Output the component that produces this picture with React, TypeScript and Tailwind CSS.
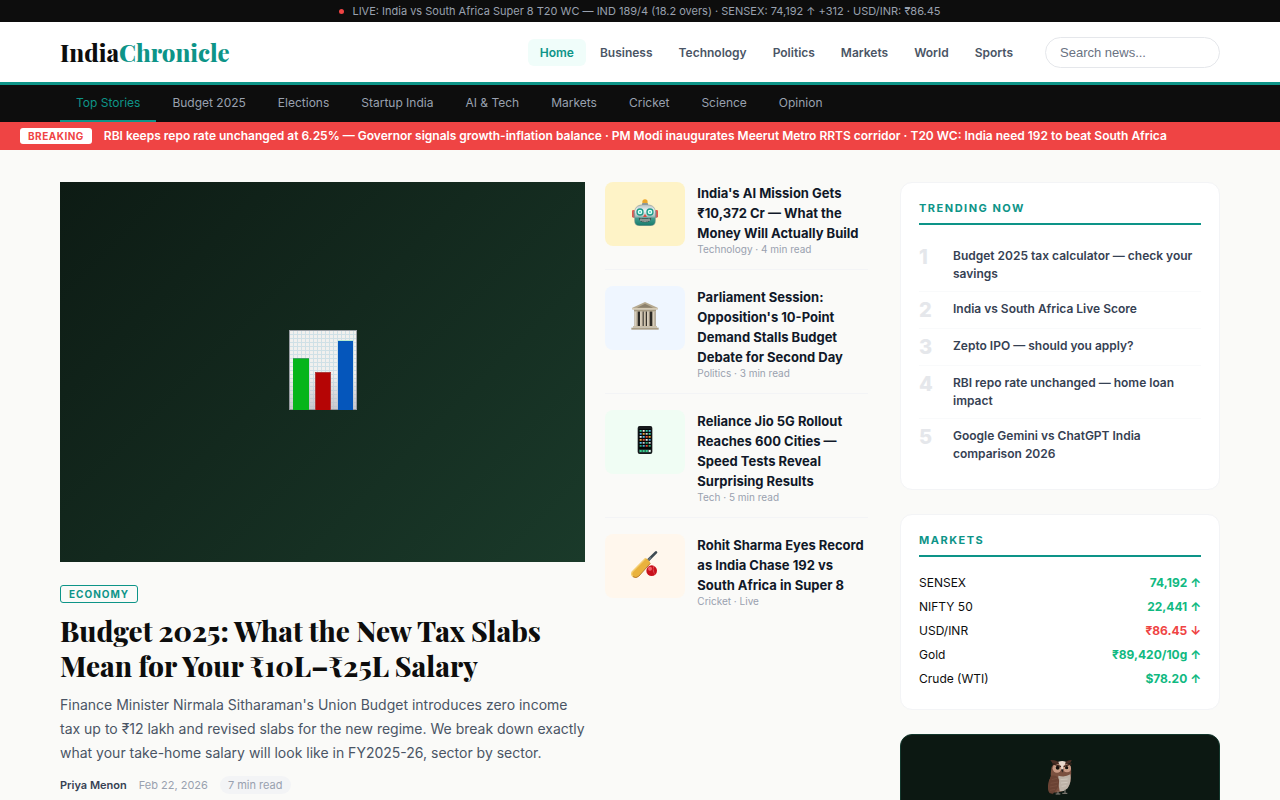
// src/App.tsx

import type { ReactNode } from 'react';
import clsx from 'clsx';

const navLinks = ['Home', 'Business', 'Technology', 'Politics', 'Markets', 'World', 'Sports'];

const topics = [
  'Top Stories',
  'Budget 2025',
  'Elections',
  'Startup India',
  'AI & Tech',
  'Markets',
  'Cricket',
  'Science',
  'Opinion'
];

const trending = [
  'Budget 2025 tax calculator — check your savings',
  'India vs South Africa Live Score',
  'Zepto IPO — should you apply?',
  'RBI repo rate unchanged — home loan impact',
  'Google Gemini vs ChatGPT India comparison 2026'
];

const markets = [
  { name: 'SENSEX', value: '74,192', up: true },
  { name: 'NIFTY 50', value: '22,441', up: true },
  { name: 'USD/INR', value: '₹86.45', up: false },
  { name: 'Gold', value: '₹89,420/10g', up: true },
  { name: 'Crude (WTI)', value: '$78.20', up: true }
];

const ChartIcon = () => (
  <svg width="68" height="80" viewBox="0 0 68 80" aria-hidden="true">
    <defs>
      <pattern id="chart-grid" width="4" height="4" patternUnits="userSpaceOnUse">
        <rect width="4" height="4" fill="#f1f0ee" />
        <path d="M0 0.5H4M0.5 0V4" stroke="#cfe0e6" strokeWidth="1" />
      </pattern>
      <linearGradient id="chart-shade" x1="0" y1="0" x2="0" y2="1">
        <stop offset="0.55" stopColor="#b9b9c2" stopOpacity="0" />
        <stop offset="1" stopColor="#b9b9c2" stopOpacity="0.75" />
      </linearGradient>
    </defs>
    <rect width="68" height="80" fill="url(#chart-grid)" />
    <rect width="68" height="80" fill="url(#chart-shade)" />
    <rect x="0.5" y="0.5" width="67" height="79" fill="none" stroke="#8b8d93" strokeOpacity="0.8" />
    <path d="M4 28H20V80H4Z" fill="#06b51a" />
    <path d="M26 42H42V80H26Z" fill="#b50505" />
    <path d="M49 11H64V80H49Z" fill="#0556bb" />
    <path d="M4 28.5H20" stroke="#3f9f63" />
    <path d="M26.5 80V42.5H41.5V80" fill="none" stroke="#a86060" strokeOpacity="0.6" />
    <path d="M49 10.5H64" stroke="#b9ead0" />
  </svg>
);

const RobotIcon = () => (
  <svg width="26" height="27" viewBox="0 0 78 81" aria-hidden="true">
    <defs>
      <linearGradient id="robot-face" x1="0" y1="0" x2="0" y2="1">
        <stop offset="0" stopColor="#b9c4c6" />
        <stop offset="0.3" stopColor="#eef3f4" />
        <stop offset="0.55" stopColor="#a9bfbf" />
        <stop offset="0.66" stopColor="#3f9a8c" />
        <stop offset="1" stopColor="#167a6b" />
      </linearGradient>
    </defs>
    <circle cx="39" cy="9" r="8" fill="#eda82c" />
    <rect x="30" y="12" width="18" height="8" rx="2" fill="#8e9899" />
    <rect x="0" y="33" width="9" height="23" rx="4" fill="#e3574f" />
    <rect x="69" y="33" width="9" height="23" rx="4" fill="#e3574f" />
    <rect x="5" y="36" width="6" height="20" fill="#7f8b8d" />
    <rect x="67" y="36" width="6" height="20" fill="#7f8b8d" />
    <path d="M8 40C8 22 20 17 39 17S70 22 70 40V66Q70 80 56 80H22Q8 80 8 66Z" fill="url(#robot-face)" stroke="#7d8889" strokeWidth="1.5" />
    <circle cx="24" cy="39" r="11" fill="#1f9a88" />
    <circle cx="54" cy="39" r="11" fill="#1f9a88" />
    <circle cx="24" cy="39" r="7" fill="#dbfff7" />
    <circle cx="54" cy="39" r="7" fill="#dbfff7" />
    <circle cx="24" cy="39" r="3" fill="#4ec9b5" />
    <circle cx="54" cy="39" r="3" fill="#4ec9b5" />
    <path d="M39 45L45 54H33Z" fill="#e2493f" />
    <path d="M20 56Q39 60 58 56Q56 70 39 70T20 56Z" fill="#43504f" />
    <path d="M27 59V66M33 60V68M39 60V69M45 60V68M51 59V66" stroke="#d4dedd" strokeWidth="3" />
  </svg>
);

const ParliamentIcon = () => (
  <svg width="28" height="28" viewBox="0 0 84 84" aria-hidden="true">
    <path d="M11 26H73V74H11Z" fill="#2b2926" />
    <path d="M42 0L80 17V22H4V17Z" fill="#b6aa91" />
    <path d="M42 5L66 17H18Z" fill="#8b806c" />
    <path d="M4 18H80V23H4Z" fill="#d5cab4" />
    <path d="M9 23H75V29H9Z" fill="#a79b83" />
    <path d="M10 28H20V74H10ZM27 28H35V74H27ZM48 28H56V74H48ZM64 28H74V74H64Z" fill="#d8cebb" />
    <path d="M38 28H45V74H38Z" fill="#cfc4af" />
    <path d="M18 29V74M34 29V74M44 29V74M55 29V74M72 29V74" stroke="#8f846f" strokeWidth="2" />
    <path d="M6 72H78V77H6Z" fill="#cabfa9" />
    <path d="M1 77H83V83H1Z" fill="#a99d86" />
  </svg>
);

const PhoneIcon = () => (
  <svg width="16" height="28" viewBox="0 0 48 84" aria-hidden="true">
    <rect x="2" y="0" width="44" height="84" rx="6" fill="#17191b" />
    <rect x="5" y="9" width="38" height="66" fill="#050607" />
    <path d="M8 12H14V17H8ZM26 12H32V17H26ZM35 21H41V26H35Z" fill="#35d1a0" />
    <path d="M17 12H23V17H17ZM8 30H14V35H8ZM26 39H32V44H26Z" fill="#eceff0" />
    <path d="M35 12H41V17H35ZM17 30H23V35H17ZM8 48H14V53H8Z" fill="#59bde9" />
    <path d="M8 21H14V26H8ZM35 39H41V44H35ZM17 57H23V62H17Z" fill="#4ba9e0" />
    <path d="M17 21H23V26H17ZM35 30H41V35H35ZM8 39H14V44H8Z" fill="#f0a33b" />
    <path d="M26 21H32V26H26ZM17 48H23V53H17ZM35 48H41V53H35Z" fill="#c7cdd0" />
    <path d="M26 30H32V35H26ZM17 39H23V44H17ZM26 57H32V62H26Z" fill="#e5533d" />
    <path d="M26 48H32V53H26ZM8 57H14V62H8ZM35 57H41V62H35Z" fill="#2fae76" />
    <path d="M6 70H42V80H6Z" fill="#26463f" />
    <path d="M8 72H14V78H8ZM17 72H23V78H17ZM26 72H32V78H26Z" fill="#37cf8f" />
    <path d="M35 72H41V78H35Z" fill="#eef4f2" />
  </svg>
);

const CricketIcon = () => (
  <svg width="28" height="28" viewBox="0 0 84 84" aria-hidden="true">
    <path d="M52 30L75 7" stroke="#3e4a52" strokeWidth="8" strokeLinecap="round" />
    <path d="M50 32L60 22" stroke="#66727a" strokeWidth="5" />
    <path d="M44 25Q50 27 52 31Q57 34 58 40L23 79Q15 86 6 80Q-1 74 4 65Z" fill="#e9b23d" />
    <path d="M44 25L4 65Q-1 74 6 80" fill="none" stroke="#f4cf74" strokeWidth="4" />
    <path d="M58 40L23 79Q15 86 6 80" fill="none" stroke="#b97b2c" strokeWidth="3" />
    <circle cx="62" cy="62" r="16" fill="#c9111c" />
    <circle cx="57" cy="56" r="6" fill="#f3636a" />
    <path d="M69 48Q64 62 72 74" fill="none" stroke="#f5b9bb" strokeWidth="2" strokeDasharray="2 2" />
  </svg>
);

const OwlIcon = () => (
  <svg width="26" height="36" viewBox="0 0 78 108" aria-hidden="true">
    <path d="M7 102L14 82L26 86L18 106Z" fill="#55372b" />
    <path d="M14 24Q10 44 12 52Q-2 76 6 100Q22 102 38 99Q64 94 70 68Q74 50 72 26Q70 12 44 11Q20 10 14 24Z" fill="#7b5140" />
    <path d="M34 50Q54 56 70 46Q74 70 62 88Q52 98 38 97Q32 72 34 50Z" fill="#bdb2a7" />
    <path d="M12 50Q30 46 36 62Q38 82 24 98Q12 103 6 100Q-1 76 12 50Z" fill="#6b4334" />
    <path d="M14 62L30 58M11 73L33 69M9 84L30 80M9 94L24 91" stroke="#7d5343" strokeWidth="2" />
    <path d="M40 62L62 60M42 72L62 70M44 82L58 80" stroke="#cfc6bb" strokeWidth="3" />
    <path d="M10 3Q30 2 45 16Q58 4 74 3Q72 13 62 15L46 21L28 16Q14 14 10 3Z" fill="#4b2f25" />
    <path d="M34 8Q46 4 56 8L50 33H42Z" fill="#ead9cd" />
    <circle cx="30" cy="28" r="13" fill="#c99a85" />
    <circle cx="60" cy="28" r="12" fill="#c99a85" />
    <circle cx="32" cy="26" r="7" fill="#e3c39a" />
    <circle cx="59" cy="26" r="6" fill="#e3c39a" />
    <circle cx="32" cy="26" r="6" fill="#170e0c" />
    <circle cx="59" cy="26" r="5" fill="#170e0c" />
    <path d="M42 31H50L46 41Z" fill="#2d2522" />
    <path d="M16 14L42 23M74 14L50 23" stroke="#3c251d" strokeWidth="4" />
    <path d="M33 97V105M26 105H40M54 92V102M46 103H61" stroke="#8d8680" strokeWidth="3" />
  </svg>
);

const stories = [
  {
    title: "India's AI Mission Gets ₹10,372 Cr — What the Money Will Actually Build",
    meta: 'Technology · 4 min read',
    tint: 'bg-[#fef3c7]',
    icon: <RobotIcon />
  },
  {
    title: "Parliament Session: Opposition's 10-Point Demand Stalls Budget Debate for Second Day",
    meta: 'Politics · 3 min read',
    tint: 'bg-[#eff6ff]',
    icon: <ParliamentIcon />
  },
  {
    title: 'Reliance Jio 5G Rollout Reaches 600 Cities — Speed Tests Reveal Surprising Results',
    meta: 'Tech · 5 min read',
    tint: 'bg-[#f0fdf4]',
    icon: <PhoneIcon />
  },
  {
    title: 'Rohit Sharma Eyes Record as India Chase 192 vs South Africa in Super 8',
    meta: 'Cricket · Live',
    tint: 'bg-[#fff7ed]',
    icon: <CricketIcon />
  }
];

interface PanelProps {
  title: string;
  children: ReactNode;
}

const Panel = ({ title, children }: PanelProps) => (
  <section className="rounded-xl border border-gray-100 bg-white p-[18px]">
    <h3 className="mb-[14px] border-b-2 border-[#0d9488] pb-2 text-[11px] leading-[14px] font-bold tracking-[1.5px] text-[#0d9488] uppercase">
      {title}
    </h3>
    {children}
  </section>
);

const Header = () => (
  <header>
    <div className="flex h-[22px] items-center justify-center gap-2 bg-[#0d0d0d] text-[11px] text-gray-400">
      <span className="h-[5px] w-[5px] rounded-full bg-[#ef4444]" />
      <span>
        LIVE: India vs South Africa Super 8 T20 WC — IND 189/4 (18.2 overs) · SENSEX: 74,192 ↑ +312 · USD/INR: ₹86.45
      </span>
    </div>

    {/* Logo, sections and search */}
    <div className="border-b-[3px] border-[#0d9488] bg-white">
      <div className="mx-auto flex h-[60px] max-w-[1200px] items-center justify-between px-5">
        <a href="#" className="font-['Playfair_Display','Liberation_Serif',serif] text-[24px] font-extrabold text-[#0d0d0d]">
          India<span className="text-[#0d9488]">Chronicle</span>
        </a>
        <div className="flex items-center gap-5">
          <nav className="flex gap-[2px]">
            {navLinks.map((link) => (
              <a
                key={link}
                href="#"
                className={clsx(
                  'rounded-md px-3 py-[6px] text-[12px] leading-[15px] font-semibold',
                  link === 'Home' ? 'bg-[#f0fdfa] text-[#0d9488]' : 'text-gray-600'
                )}
              >
                {link}
              </a>
            ))}
          </nav>
          <input
            type="search"
            aria-label="Search news"
            placeholder="Search news..."
            className="h-[31px] w-[175px] rounded-full border border-gray-200 bg-white px-[14px] font-['Liberation_Sans',sans-serif] text-[13px] placeholder:text-gray-500"
          />
        </div>
      </div>
    </div>

    {/* Topic bar */}
    <div className="bg-[#0d0d0d]">
      <nav className="mx-auto flex max-w-[1200px] px-5">
        {topics.map((topic) => (
          <a
            key={topic}
            href="#"
            className={clsx(
              'border-b-2 px-4 py-[10px] text-[12px] leading-[15px]',
              topic === 'Top Stories' ? 'border-[#0d9488] text-[#0d9488]' : 'border-transparent text-gray-400'
            )}
          >
            {topic}
          </a>
        ))}
      </nav>
    </div>

    <div className="flex items-center gap-3 bg-[#ef4444] px-5 py-[6px] text-[12px] leading-4 font-semibold text-white">
      <span className="rounded-[3px] bg-white px-2 text-[10px] font-bold tracking-[0.5px] text-[#ef4444]">
        BREAKING
      </span>
      <span>
        RBI keeps repo rate unchanged at 6.25% — Governor signals growth-inflation balance · PM Modi inaugurates Meerut
        Metro RRTS corridor · T20 WC: India need 192 to beat South Africa
      </span>
    </div>
  </header>
);

const LeadStory = () => (
  <article>
    <div className="flex h-[380px] items-center justify-center bg-linear-135 from-[#0d1b14] to-[#1a3a2a] pb-1">
      <ChartIcon />
    </div>
    <div className="pt-[23px]">
      <span className="block w-fit rounded-[3px] border border-[#0d9488] px-2 text-[10px] leading-4 font-bold tracking-[1px] text-[#0d9488]">
        ECONOMY
      </span>
      <h1 className="mt-[10px] font-['Playfair_Display','Liberation_Serif',serif] text-[28px] leading-[35px] font-extrabold text-[#0d0d0d]">
        Budget 2025: What the New Tax Slabs Mean for Your ₹10L–₹25L Salary
      </h1>
      <p className="mt-[10px] text-[14px] leading-6 text-gray-600">
        Finance Minister Nirmala Sitharaman's Union Budget introduces zero income tax up to ₹12 lakh and revised slabs
        for the new regime. We break down exactly what your take-home salary will look like in FY2025-26, sector by
        sector.
      </p>
      <div className="mt-[11px] flex items-center gap-3 text-[11px] leading-[18px] text-gray-400">
        <span className="font-semibold text-gray-700">Priya Menon</span>
        <span>Feb 22, 2026</span>
        <span className="rounded-full bg-gray-100 px-2">7 min read</span>
      </div>
    </div>
  </article>
);

const StoryList = () => (
  <div className="flex flex-col gap-4">
    {stories.map((story) => (
      <article key={story.title} className="flex gap-3 border-b border-gray-100 pb-[14px] last:border-b-0">
        <div className={clsx('flex h-16 w-20 shrink-0 items-center justify-center rounded-lg pb-1', story.tint)}>
          {story.icon}
        </div>
        <div className="pt-px">
          <h2 className="text-[13px] leading-5 font-bold text-gray-900">{story.title}</h2>
          <p className="text-[10px] leading-3 text-gray-400">{story.meta}</p>
        </div>
      </article>
    ))}
  </div>
);

const Sidebar = () => (
  <aside className="flex flex-col gap-6">
    <Panel title="Trending Now">
      <ol>
        {trending.map((item, i) => (
          <li key={item} className="flex gap-3 border-b border-gray-50 py-2 last:border-b-0">
            <span className="w-[22px] shrink-0 text-[20px] leading-5 font-extrabold text-gray-200">{i + 1}</span>
            <a href="#" className="text-[12px] leading-[18px] font-semibold text-gray-700">
              {item}
            </a>
          </li>
        ))}
      </ol>
    </Panel>

    <Panel title="Markets">
      <table className="w-full text-[12px] leading-6">
        <tbody>
          {markets.map((row) => (
            <tr key={row.name}>
              <th scope="row" className="p-0 text-left font-normal text-[#0d0d0d]">
                {row.name}
              </th>
              <td className={clsx('p-0 text-right font-bold', row.up ? 'text-[#10b981]' : 'text-[#ef4444]')}>
                {row.value} {row.up ? '↑' : '↓'}
              </td>
            </tr>
          ))}
        </tbody>
      </table>
    </Panel>

    <section className="flex justify-center rounded-xl border border-[#12372c] bg-[#0c1812] px-5 py-6">
      <OwlIcon />
    </section>
  </aside>
);

const App = () => {
  return (
    <div className="min-h-screen bg-[#fafaf8] font-['Inter',sans-serif]">
      <Header />
      <main className="mx-auto grid max-w-[1200px] grid-cols-[minmax(0,1fr)_320px] gap-8 px-5 py-8">
        <div className="grid grid-cols-[2fr_1fr] gap-5">
          <LeadStory />
          <StoryList />
        </div>
        <Sidebar />
      </main>
    </div>
  );
};

export default App;
